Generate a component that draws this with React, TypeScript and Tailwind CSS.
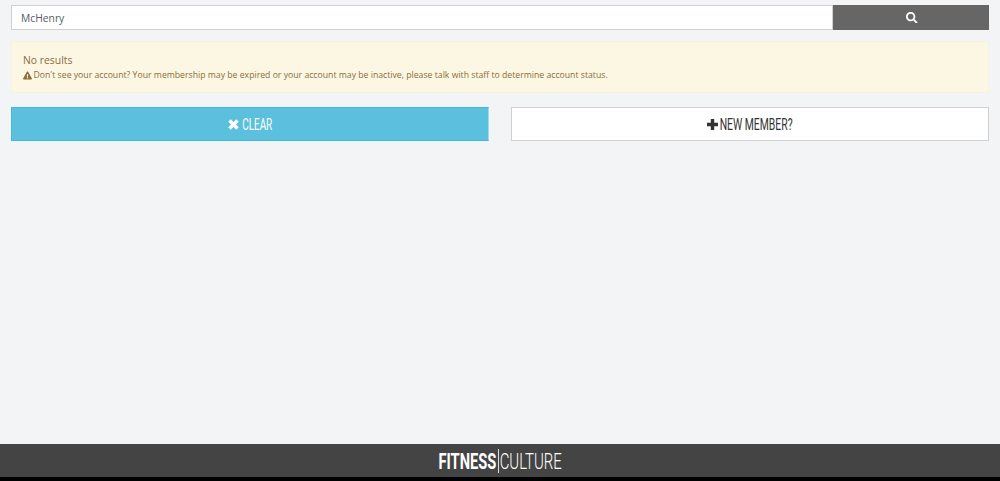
import { FaExclamationTriangle, FaSearch } from 'react-icons/fa';

// Oswald isn't installed, so squeeze Roboto into a box of the measured width
function Condensed({ width, className, children }: { width: string; className: string; children: string }) {
  return (
    <span className={`flex justify-center whitespace-nowrap ${width}`}>
      <span className={`inline-block font-['Roboto',sans-serif] ${className}`}>{children}</span>
    </span>
  );
}

export default function App() {
  return (
    <div className="flex h-[481px] flex-col overflow-hidden bg-[#f2f4f6] font-['Open_Sans',sans-serif]">
      <main className="flex-1 px-[11px] pt-[5px]">
        <div className="flex h-[25px]">
          <input
            type="text"
            readOnly
            value="McHenry"
            className="h-full min-w-0 flex-1 border border-[#d0d0d2] bg-white px-[9px] text-[10.3px] text-[#555c66] outline-none"
          />
          <button className="flex h-full w-[156px] items-center justify-center bg-[#666666] pl-[2px] text-[11.5px] text-white">
            <FaSearch />
          </button>
        </div>

        <div className="mt-[11px] h-[52px] border border-[#f8f1dc] bg-[#fcf7e3] px-[11px] pt-[10px] text-[#8a6d3b]">
          <div className="text-[10.4px] leading-[16px]">No results</div>
          <div className="flex items-center gap-[1.5px] text-[8.7px] leading-[15px]">
            <FaExclamationTriangle className="text-[9px]" />
            <span>Don't see your account? Your membership may be expired or your account may be inactive, please talk with staff to determine account status.</span>
          </div>
        </div>

        <div className="mt-[14px] flex gap-[22px]">
          <button className="flex h-[34px] flex-1 items-center justify-center gap-[3px] border border-[#46b8da] border-r-[#9bdcf0] bg-[#5bc0de] pt-[1px] text-white">
            <svg width="11" height="11" viewBox="0 0 11 11" stroke="currentColor" strokeWidth="3.4">
              <path d="M1.5 1.5 9.5 9.5M9.5 1.5 1.5 9.5" />
            </svg>
            <Condensed width="w-[30px]" className="scale-x-[0.62] text-[16px]">CLEAR</Condensed>
          </button>
          <button className="flex h-[34px] flex-1 items-center justify-center gap-[2px] border border-[#d0d0d2] bg-white pt-[1px] text-[#333333]">
            <svg width="11" height="11" viewBox="0 0 11 11" fill="currentColor">
              <path d="M3.8 0h3.4v3.8H11v3.4H7.2V11H3.8V7.2H0V3.8h3.8z" />
            </svg>
            <Condensed width="w-[73px]" className="scale-x-[0.65] text-[16px]">NEW MEMBER?</Condensed>
          </button>
        </div>
      </main>

      <footer className="flex h-[33px] items-center justify-center gap-[2px] bg-[#444444] pt-[1px] text-white">
        <Condensed width="w-[57px]" className="scale-x-[0.667] text-[22px] font-bold">FITNESS</Condensed>
        <span className="h-[24px] w-px bg-[#dddddd]" />
        <Condensed width="w-[61px]" className="scale-x-[0.68] text-[22px] font-light">CULTURE</Condensed>
      </footer>
      <div className="h-[4px] bg-black" />
    </div>
  );
}
